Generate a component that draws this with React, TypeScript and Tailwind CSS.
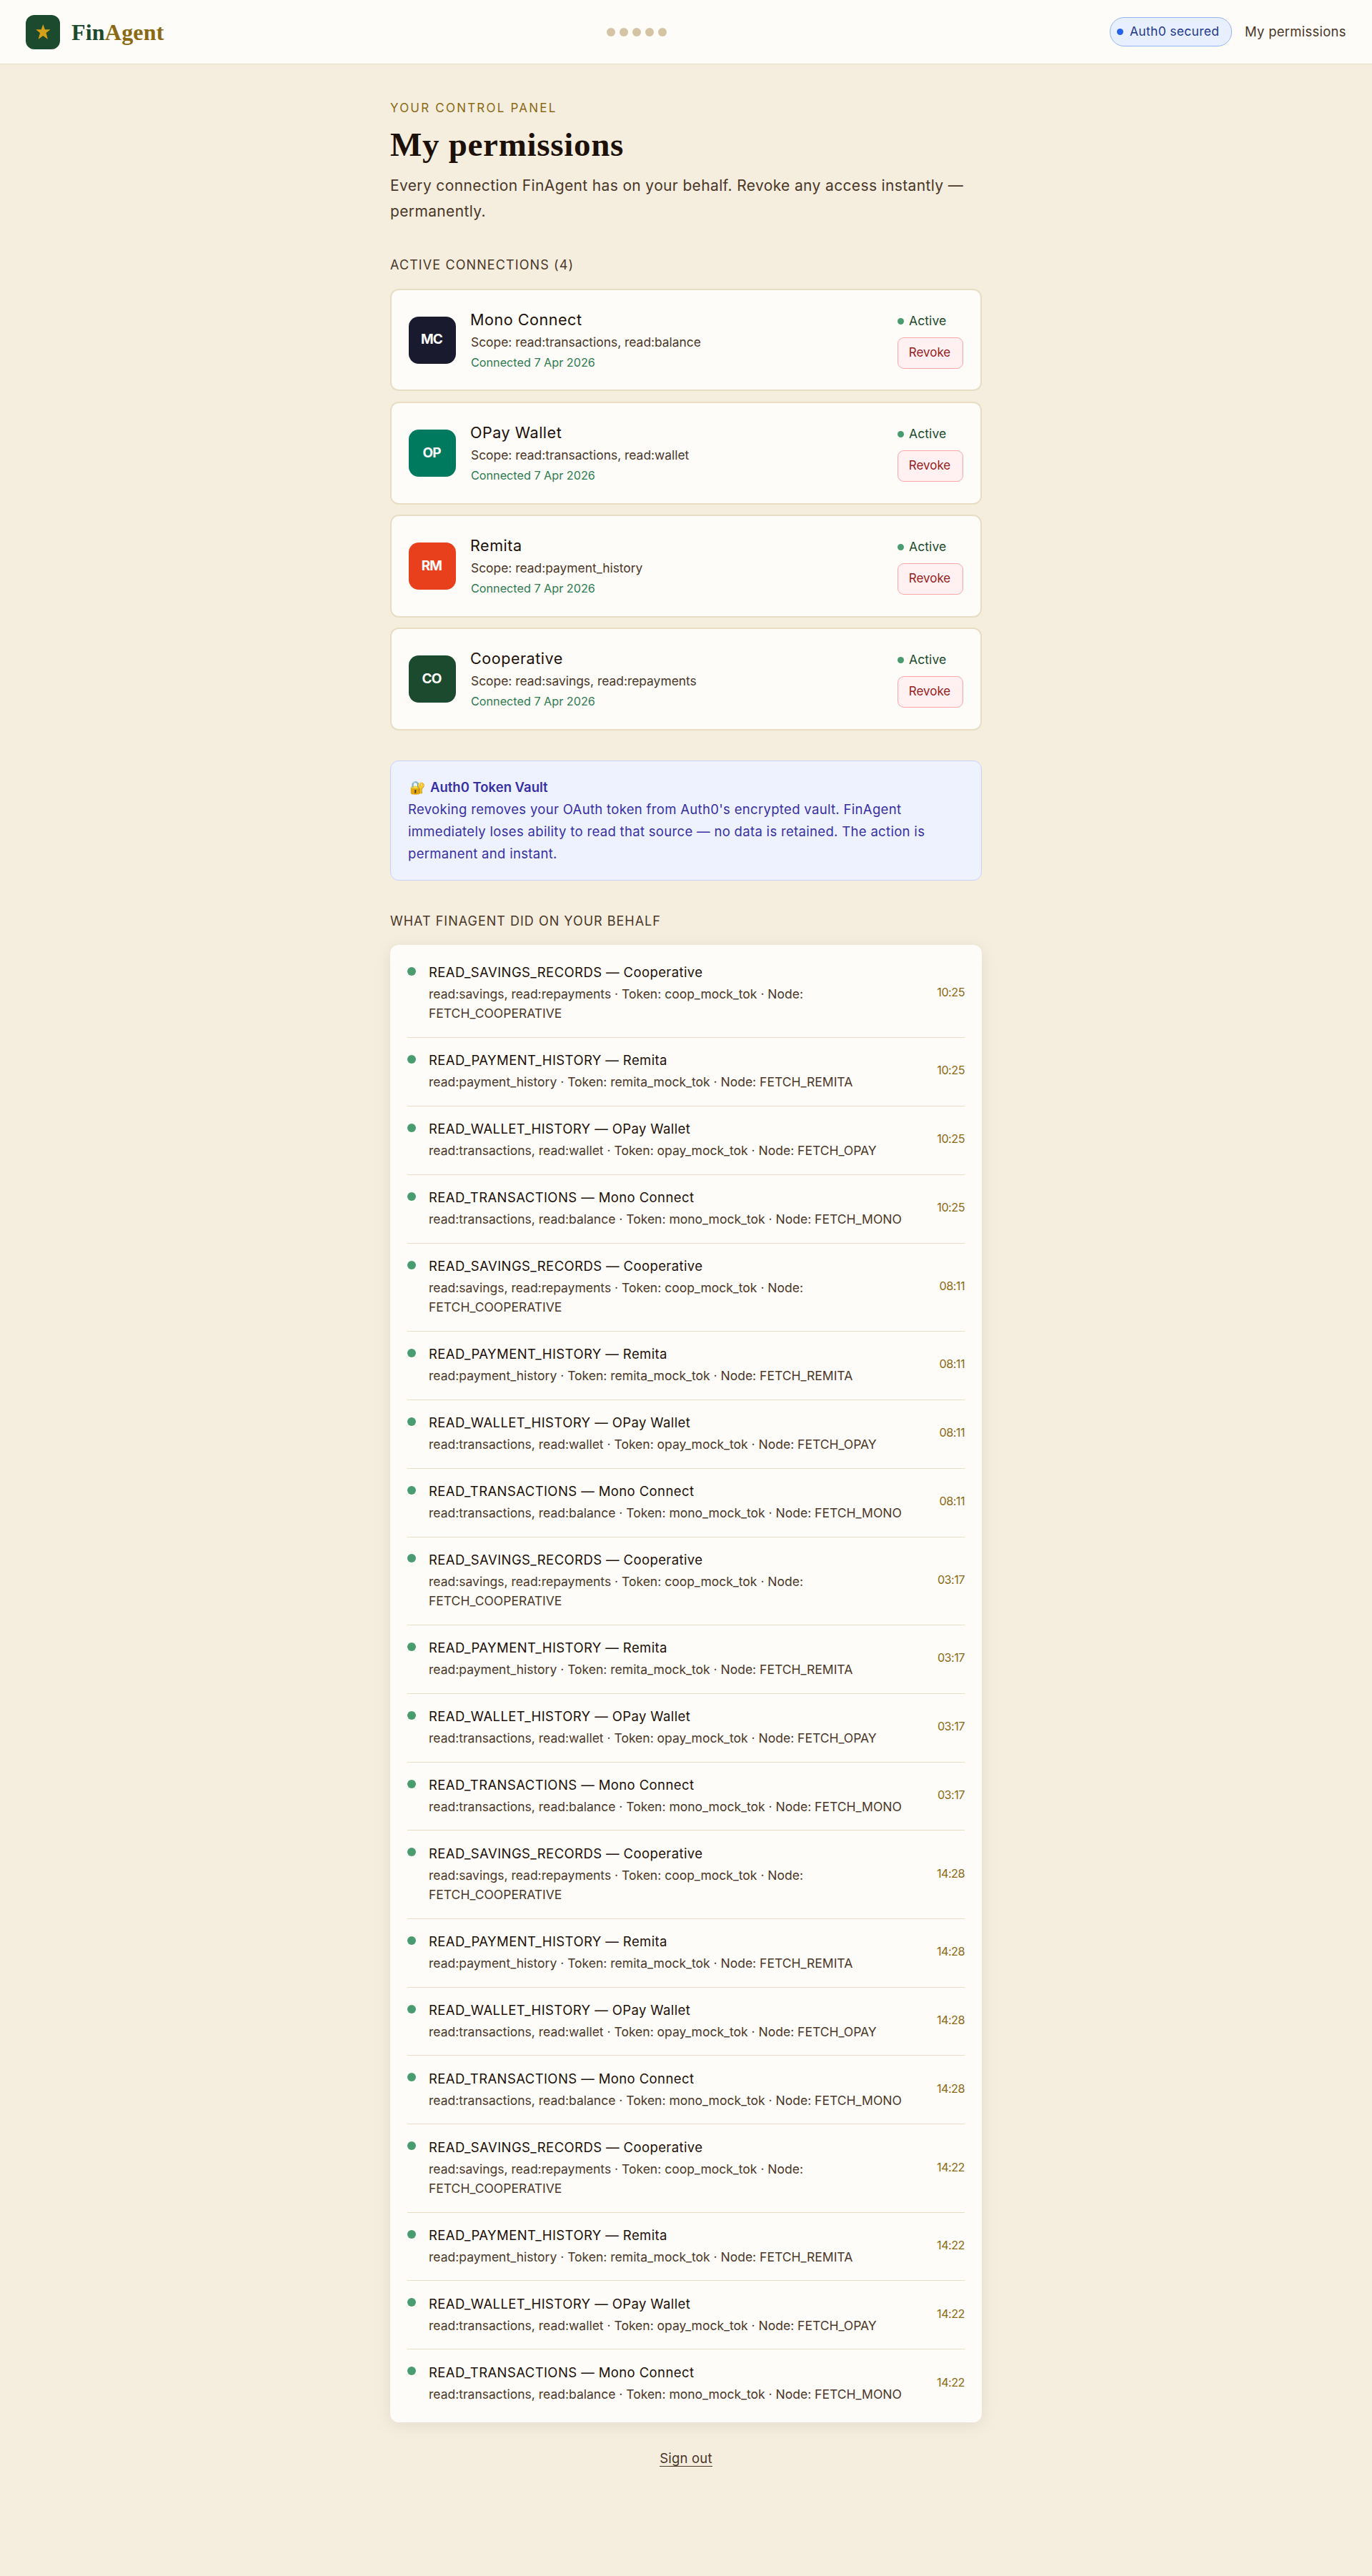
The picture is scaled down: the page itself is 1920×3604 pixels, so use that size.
type Connection = {
  code: string;
  name: string;
  scope: string;
  tile: string;
};

type LogEntry = {
  title: string;
  detail: string;
};

const connections: Connection[] = [
  { code: "MC", name: "Mono Connect", scope: "read:transactions, read:balance", tile: "bg-[#1a1a2e]" },
  { code: "OP", name: "OPay Wallet", scope: "read:transactions, read:wallet", tile: "bg-[#007a5e]" },
  { code: "RM", name: "Remita", scope: "read:payment_history", tile: "bg-[#e8401c]" },
  { code: "CO", name: "Cooperative", scope: "read:savings, read:repayments", tile: "bg-[#1b4a2e]" },
];

const runEntries: LogEntry[] = [
  {
    title: "READ_SAVINGS_RECORDS — Cooperative",
    detail: "read:savings, read:repayments · Token: coop_mock_tok · Node: FETCH_COOPERATIVE",
  },
  {
    title: "READ_PAYMENT_HISTORY — Remita",
    detail: "read:payment_history · Token: remita_mock_tok · Node: FETCH_REMITA",
  },
  {
    title: "READ_WALLET_HISTORY — OPay Wallet",
    detail: "read:transactions, read:wallet · Token: opay_mock_tok · Node: FETCH_OPAY",
  },
  {
    title: "READ_TRANSACTIONS — Mono Connect",
    detail: "read:transactions, read:balance · Token: mono_mock_tok · Node: FETCH_MONO",
  },
];

const runTimes = ["10:25", "08:11", "03:17", "14:28", "14:22"];

function Header() {
  return (
    <header className="flex h-[90px] items-center justify-between border-b border-[#e8dcc4] bg-[#fefcf8] px-9">
      <div className="flex items-center gap-4">
        <div className="flex size-12 items-center justify-center rounded-xl bg-[#1b4a2e]">
          <svg viewBox="0 0 24 24" className="size-6" fill="#d4a017">
            <path d="M12.3 1 14.9 8.3H22.6L16.5 13 18.9 22 12.3 17 5.6 22 8 13 2.1 8.3H9.7Z" />
          </svg>
        </div>
        <div className="font-['Liberation_Serif',serif] text-[32px] leading-9 font-bold tracking-[0.2px] text-[#1b4a2e]">
          Fin<span className="text-[#8b6914]">Agent</span>
        </div>
      </div>

      <div className="flex gap-1.5">
        {[0, 1, 2, 3, 4].map((step) => (
          <span key={step} className="size-3 rounded-full bg-[#d4c4a4]" />
        ))}
      </div>

      <div className="flex items-center gap-[18px]">
        <div className="flex h-[41px] w-[171px] items-center gap-[9px] rounded-[20px] border border-[#93b4f5] bg-[#e8effe] pl-[9px] text-[17.5px] font-[440] tracking-[0.3px] whitespace-nowrap text-[#1e3a8a]">
          <span className="size-[9px] rounded-full bg-[#2563eb]" />
          Auth0 secured
        </div>
        <a href="#" className="w-[142px] text-[18.5px] tracking-[0.25px] whitespace-nowrap text-[#4a3728]">
          My permissions
        </a>
      </div>
    </header>
  );
}

function ConnectionCard({ item }: { item: Connection }) {
  return (
    <div className="flex h-[143.5px] items-center gap-5 rounded-xl border-2 border-[#e8dcc4] bg-[#fefcf8] px-6">
      <div
        className={`flex size-[66px] items-center justify-center rounded-[14px] pr-0.5 text-[19px] font-bold tracking-[-0.9px] text-white ${item.tile}`}
      >
        {item.code}
      </div>
      <div className="flex-1">
        <h3 className="text-[21.6px] leading-[30px] font-[440] tracking-[0.5px] text-[#1c1008]">{item.name}</h3>
        <p className="mt-[3px] pl-px text-[17.4px] leading-[27px] text-[#4a3728]">Scope: {item.scope}</p>
        <p className="mt-[3px] pl-px text-[16.2px] leading-[25px] text-[#2d7a4f]">Connected 7 Apr 2026</p>
      </div>
      <div className="w-[92px] pb-px">
        <div className="flex items-center gap-[7px] text-[17.5px] leading-[27px] font-[440] tracking-[0.1px] text-[#1b4a2e]">
          <span className="mt-0.5 size-[9px] rounded-full bg-[#4a9b6f]" />
          Active
        </div>
        <button className="mt-2.5 h-11 w-full rounded-[9px] border border-[#fca5a5] bg-[#fff1f2] pr-0.5 text-[17px] font-[440] text-[#991b1b]">
          Revoke
        </button>
      </div>
    </div>
  );
}

function LogRow({ entry, time }: { entry: LogEntry; time: string }) {
  return (
    <li className="flex items-center gap-[18px] border-b border-[#e8dcc4] pt-[18.6px] pb-[19.15px] last:border-b-0">
      <span className="mt-[5.4px] size-3 shrink-0 self-start rounded-full bg-[#4a9b6f]" />
      <div className="flex-1">
        <p className="text-[18.5px] leading-[27px] font-[440] tracking-[0.4px] text-[#1c1008]">{entry.title}</p>
        <p className="mt-[3px] text-[17.5px] leading-[27.2px] text-[#4a3728]">{entry.detail}</p>
      </div>
      <span className="pb-[3px] text-[16.2px] font-[440] tracking-[-0.5px] text-[#8b6914]">{time}</span>
    </li>
  );
}

export default function App() {
  return (
    <div className="min-h-[3604px] bg-[#f5eedf] font-['Inter',sans-serif]">
      <Header />

      <main className="mx-auto w-[828px] pt-12">
        <p className="text-[17px] leading-[27px] tracking-[2.2px] text-[#8b6914]">YOUR CONTROL PANEL</p>
        <h1 className="mt-2.5 font-['Liberation_Serif',serif] text-[47px] leading-[54px] font-bold tracking-[0.7px] text-[#1c1008]">
          My permissions
        </h1>
        <p className="mt-[13.4px] text-[21px] leading-9 tracking-[0.36px] text-[#4a3728]">
          Every connection FinAgent has on your behalf. Revoke any access instantly — permanently.
        </p>

        <h2 className="mt-[43px] text-[18px] leading-7 tracking-[1.1px] text-[#4a3728]">ACTIVE CONNECTIONS (4)</h2>
        <div className="mt-[18.6px] flex flex-col gap-[14.6px]">
          {connections.map((item) => (
            <ConnectionCard key={item.code} item={item} />
          ))}
        </div>

        <section className="mt-[42px] rounded-xl border border-[#c7d2fe] bg-[#eef2ff] px-6 pt-[21.4px] pb-[20.2px] text-[18.5px] leading-[31.1px] tracking-[0.32px] text-[#3730a3]">
          <p className="flex gap-[7px] pl-0.5 font-semibold tracking-normal">
            <span className="text-[18px]">🔐</span>
            Auth0 Token Vault
          </p>
          <p>
            Revoking removes your OAuth token from Auth0's encrypted vault. FinAgent immediately loses ability to read
            that source — no data is retained. The action is permanent and instant.
          </p>
        </section>

        <h2 className="mt-[43.6px] text-[18px] leading-7 tracking-[1px] text-[#4a3728]">
          WHAT FINAGENT DID ON YOUR BEHALF
        </h2>
        <ul className="mt-[18.7px] rounded-xl bg-[#fefcf8] px-6 py-[6.6px] shadow-[0_4px_24px_rgba(28,16,8,0.08)]">
          {runTimes.map((time) =>
            runEntries.map((entry) => <LogRow key={time + entry.title} entry={entry} time={time} />)
          )}
        </ul>

        <div className="mt-9 text-center text-[18.5px] leading-7 tracking-[0.2px] text-[#4a3728]">
          <a href="#" className="border-b border-[#4a3728]">
            Sign out
          </a>
        </div>
      </main>
    </div>
  );
}
